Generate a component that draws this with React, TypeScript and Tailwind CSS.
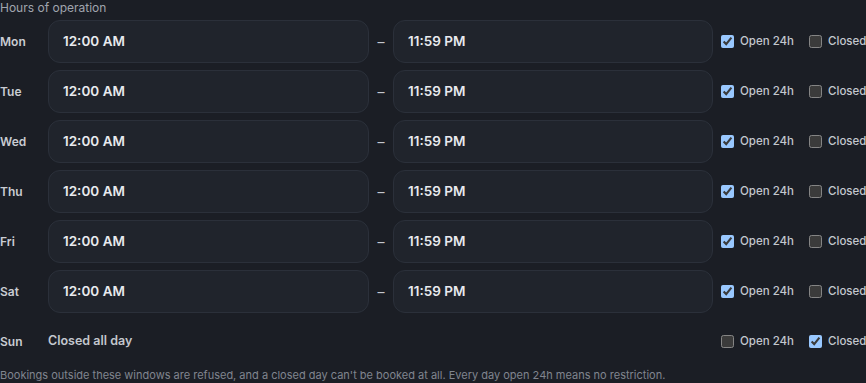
import React from "react";

type DayRow = {
  day: string;
  from: string;
  to: string;
  open24: boolean;
  closed: boolean;
};

const DAYS: DayRow[] = [
  { day: "Mon", from: "12:00 AM", to: "11:59 PM", open24: true, closed: false },
  { day: "Tue", from: "12:00 AM", to: "11:59 PM", open24: true, closed: false },
  { day: "Wed", from: "12:00 AM", to: "11:59 PM", open24: true, closed: false },
  { day: "Thu", from: "12:00 AM", to: "11:59 PM", open24: true, closed: false },
  { day: "Fri", from: "12:00 AM", to: "11:59 PM", open24: true, closed: false },
  { day: "Sat", from: "12:00 AM", to: "11:59 PM", open24: true, closed: false },
  { day: "Sun", from: "", to: "", open24: false, closed: true },
];

function Check({ checked, label }: { checked: boolean; label: string }) {
  return (
    <label className="flex items-center gap-[6px] text-[11.5px] font-medium text-[#c3c7ce]">
      <input
        type="checkbox"
        defaultChecked={checked}
        className="h-[13px] w-[13px] [color-scheme:dark]"
      />
      <span className="whitespace-nowrap">{label}</span>
    </label>
  );
}

function TimeBox({ value, width }: { value: string; width: string }) {
  return (
    <div
      className={`${width} flex h-[43px] items-center rounded-xl border border-[#2b303a] bg-[#20242c] pl-[14px] text-[13.5px] font-semibold text-[#e8eaee]`}
    >
      {value}
    </div>
  );
}

export default function App() {
  return (
    <div
      className="h-[383px] w-[866px] overflow-hidden bg-[#1b1e25] [color-scheme:dark]"
      style={{ fontFamily: "Inter, 'Noto Sans', sans-serif" }}
    >
      <div className="w-[900px]">
        <p className="pt-px text-[12px] leading-[14px] text-[#a0a5ae]">
          Hours of operation
        </p>
        <div className="mt-[5px] flex flex-col gap-[7px]">
          {DAYS.map((row) => (
            <div key={row.day} className="flex h-[43px] items-center">
              <span className="w-[48px] text-[12px] font-semibold text-[#c9ccd2]">
                {row.day}
              </span>
              {row.closed ? (
                <span className="w-[665px] text-[12.5px] font-semibold text-[#c3c7ce]">
                  Closed all day
                </span>
              ) : (
                <>
                  <TimeBox value={row.from} width="w-[321px]" />
                  <span className="w-[24px] text-center text-[14px] text-[#c3c7ce]">
                    –
                  </span>
                  <TimeBox value={row.to} width="w-[320px]" />
                </>
              )}
              <div className="ml-[8px] flex items-center gap-[15px]">
                <Check checked={row.open24} label="Open 24h" />
                <Check checked={row.closed} label="Closed" />
              </div>
            </div>
          ))}
        </div>
        <p className="mt-[5px] text-[11px] leading-[14px] text-[#80858f]">
          Bookings outside these windows are refused, and a closed day can't be
          booked at all. Every day open 24h means no restriction.
        </p>
      </div>
    </div>
  );
}
